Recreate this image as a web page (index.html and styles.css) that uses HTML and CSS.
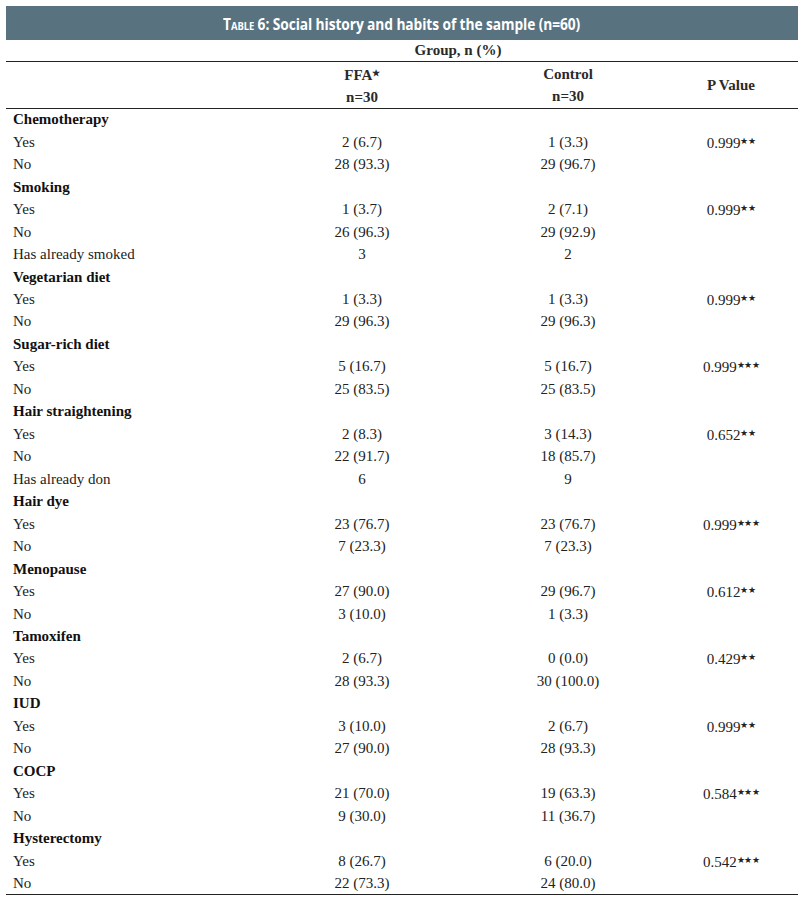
FILE: index.html
```html
<!DOCTYPE html>
<html>
<head>
<meta charset="utf-8">
<link rel="stylesheet" href="styles.css">
</head>
<body>
<div class="wrap">
  <div class="title"><span class="title-text"><span class="sc">Table</span> 6: Social history and habits of the sample (n=60)</span></div>
  <table class="tbl">
    <colgroup>
      <col class="c1"><col class="c2"><col class="c3"><col class="c4">
    </colgroup>
    <thead>
      <tr class="grp"><th colspan="4">Group, n (%)</th></tr>
      <tr class="hd">
        <th></th>
        <th>FFA<span class="st">★</span><br>n=30</th>
        <th>Control<br>n=30</th>
        <th class="p">P Value</th>
      </tr>
    </thead>
    <tbody>
      <tr class="cat"><td colspan="4">Chemotherapy</td></tr>
      <tr><td>Yes</td><td>2 (6.7)</td><td>1 (3.3)</td><td class="p">0.999<span class="st">★★</span></td></tr>
      <tr><td>No</td><td>28 (93.3)</td><td>29 (96.7)</td><td class="p"></td></tr>
      <tr class="cat"><td colspan="4">Smoking</td></tr>
      <tr><td>Yes</td><td>1 (3.7)</td><td>2 (7.1)</td><td class="p">0.999<span class="st">★★</span></td></tr>
      <tr><td>No</td><td>26 (96.3)</td><td>29 (92.9)</td><td class="p"></td></tr>
      <tr><td>Has already smoked</td><td>3</td><td>2</td><td class="p"></td></tr>
      <tr class="cat"><td colspan="4">Vegetarian diet</td></tr>
      <tr><td>Yes</td><td>1 (3.3)</td><td>1 (3.3)</td><td class="p">0.999<span class="st">★★</span></td></tr>
      <tr><td>No</td><td>29 (96.3)</td><td>29 (96.3)</td><td class="p"></td></tr>
      <tr class="cat"><td colspan="4">Sugar-rich diet</td></tr>
      <tr><td>Yes</td><td>5 (16.7)</td><td>5 (16.7)</td><td class="p">0.999<span class="st">★★★</span></td></tr>
      <tr><td>No</td><td>25 (83.5)</td><td>25 (83.5)</td><td class="p"></td></tr>
      <tr class="cat"><td colspan="4">Hair straightening</td></tr>
      <tr><td>Yes</td><td>2 (8.3)</td><td>3 (14.3)</td><td class="p">0.652<span class="st">★★</span></td></tr>
      <tr><td>No</td><td>22 (91.7)</td><td>18 (85.7)</td><td class="p"></td></tr>
      <tr><td>Has already don</td><td>6</td><td>9</td><td class="p"></td></tr>
      <tr class="cat"><td colspan="4">Hair dye</td></tr>
      <tr><td>Yes</td><td>23 (76.7)</td><td>23 (76.7)</td><td class="p">0.999<span class="st">★★★</span></td></tr>
      <tr><td>No</td><td>7 (23.3)</td><td>7 (23.3)</td><td class="p"></td></tr>
      <tr class="cat"><td colspan="4">Menopause</td></tr>
      <tr><td>Yes</td><td>27 (90.0)</td><td>29 (96.7)</td><td class="p">0.612<span class="st">★★</span></td></tr>
      <tr><td>No</td><td>3 (10.0)</td><td>1 (3.3)</td><td class="p"></td></tr>
      <tr class="cat"><td colspan="4">Tamoxifen</td></tr>
      <tr><td>Yes</td><td>2 (6.7)</td><td>0 (0.0)</td><td class="p">0.429<span class="st">★★</span></td></tr>
      <tr><td>No</td><td>28 (93.3)</td><td>30 (100.0)</td><td class="p"></td></tr>
      <tr class="cat"><td colspan="4">IUD</td></tr>
      <tr><td>Yes</td><td>3 (10.0)</td><td>2 (6.7)</td><td class="p">0.999<span class="st">★★</span></td></tr>
      <tr><td>No</td><td>27 (90.0)</td><td>28 (93.3)</td><td class="p"></td></tr>
      <tr class="cat"><td colspan="4">COCP</td></tr>
      <tr><td>Yes</td><td>21 (70.0)</td><td>19 (63.3)</td><td class="p">0.584<span class="st">★★★</span></td></tr>
      <tr><td>No</td><td>9 (30.0)</td><td>11 (36.7)</td><td class="p"></td></tr>
      <tr class="cat"><td colspan="4">Hysterectomy</td></tr>
      <tr><td>Yes</td><td>8 (26.7)</td><td>6 (20.0)</td><td class="p">0.542<span class="st">★★★</span></td></tr>
      <tr><td>No</td><td>22 (73.3)</td><td>24 (80.0)</td><td class="p"></td></tr>
    </tbody>
  </table>
</div>
</body>
</html>
```

FILE: styles.css
```css
* { box-sizing: border-box; }
html, body { margin: 0; padding: 0; background: #fff; }
body {
  font-family: "Liberation Serif", "Times New Roman", serif;
  color: #222;
}
.wrap {
  width: 792px;
  margin: 6px 0 0 6px;
}
.title {
  height: 34px;
  background: #587280;
  color: #fff;
  font-family: "Open Sans", "Liberation Sans", Arial, sans-serif;
  font-weight: bold;
  font-size: 16px;
  text-align: center;
  padding-top: 8px;
  line-height: 20px;
  white-space: nowrap;
}
.title-text {
  display: inline-block;
  transform: scaleX(0.86);
  letter-spacing: -0.1px;
}
.title .sc { font-variant: small-caps; }
.tbl {
  width: 792px;
  border-collapse: collapse;
  table-layout: fixed;
  font-size: 15px;
}
.c1 { width: 256px; }
.c2 { width: 200px; }
.c3 { width: 212px; }
.c4 { width: 124px; }
.tbl th, .tbl td {
  padding: 0;
  text-align: center;
  vertical-align: middle;
}
.tbl th { font-weight: bold; color: #2a2a2a; }
.grp th {
  height: 21px;
  line-height: 18px;
  padding-left: 112px;
  border-bottom: 1.5px solid #222;
}
.hd th {
  height: 45px;
  line-height: 22px;
  border-bottom: 1.5px solid #222;
}
.tbl .p { padding-right: 10px; }
.tbl tbody td { height: 22.47px; line-height: 18px; }
.tbl tbody td:first-child { text-align: left; padding-left: 7px; }
.tbl tbody tr:last-child td { border-bottom: 1.5px solid #222; }
.cat td { font-weight: bold; color: #111; }
.st { font-size: 9px; vertical-align: 4px; letter-spacing: -0.5px; }
```
